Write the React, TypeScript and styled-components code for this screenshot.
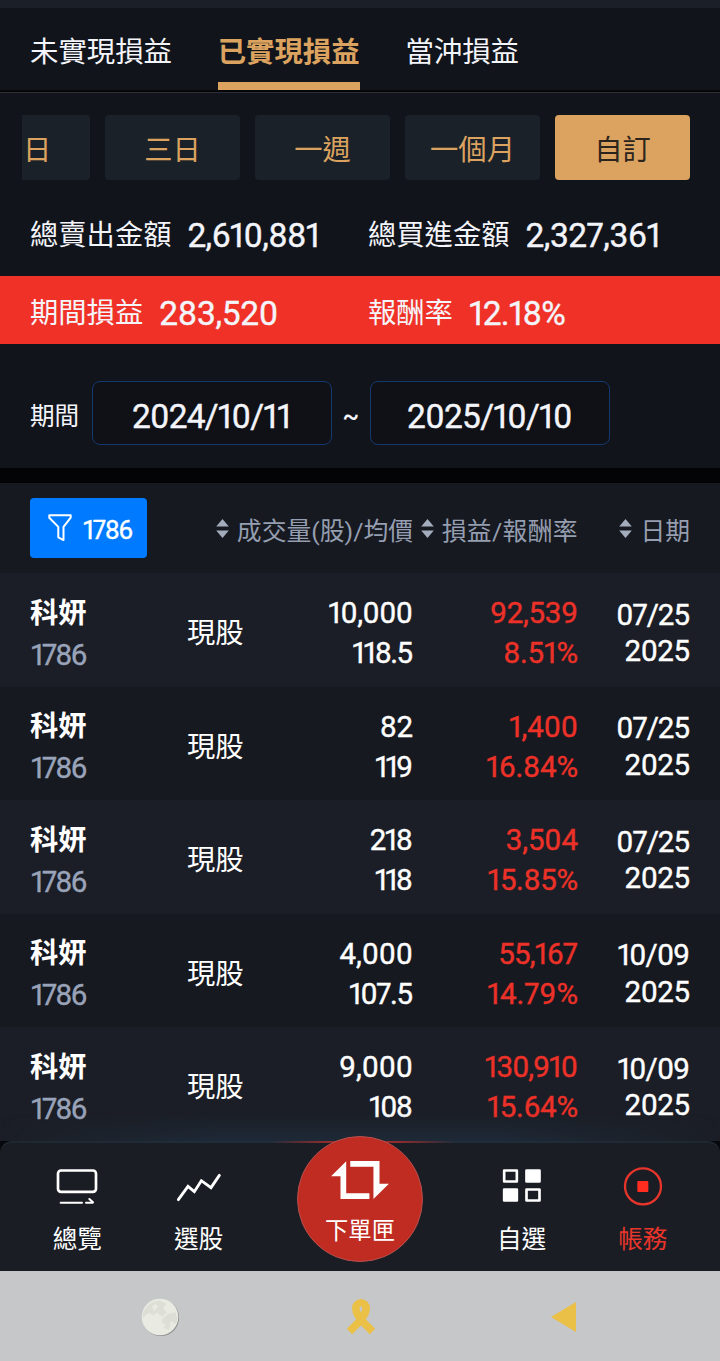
import React from "react";
import styled, { createGlobalStyle } from "styled-components";

const GlobalStyle = createGlobalStyle`
  *, *::before, *::after { box-sizing: border-box; }
  body {
    margin: 0;
    background: #11141b;
    color: #f4f5fa;
    font-family: Roboto, "Noto Sans CJK TC", sans-serif;
    font-variant-numeric: proportional-nums;
    font-size: 28.3px;
    white-space: nowrap;
  }
`;

const Screen = styled.div`
  width: 720px;
  height: 1361px;
  overflow: hidden;
  display: flex;
  flex-direction: column;
`;

const TopStrip = styled.div`
  height: 8px;
  flex: none;
  background: #1b1f28;
`;

const Tabs = styled.nav`
  display: flex;
  flex: none;
  gap: 45.7px;
  height: 85px;
  padding: 0 30px 0;
  background: linear-gradient(#11141b 82px, #050608 82px, #050608 84px, #2b2f35 84px);
`;

const Tab = styled.div<{ $active?: boolean }>`
  height: 82px;
  min-width: 142px;
  line-height: 89px;
  font-size: 28.4px;
  color: ${(p) => (p.$active ? "#dba35f" : "#f4f5fa")};
  font-weight: ${(p) => (p.$active ? 700 : 400)};
  box-shadow: ${(p) => (p.$active ? "inset 0 -8px #dba35f" : "none")};
`;

const Ranges = styled.div`
  display: flex;
  flex: none;
  gap: 15px;
  padding: 22px 30px 0 22px;
`;

const RangeButton = styled.div<{ $selected?: boolean; $cut?: boolean }>`
  width: ${(p) => (p.$cut ? "68px" : "135px")};
  padding-left: ${(p) => (p.$cut ? "1px" : "0")};
  text-align: ${(p) => (p.$cut ? "left" : "center")};
  height: 65px;
  line-height: 72px;
  border-radius: ${(p) => (p.$cut ? "0 4px 4px 0" : "4px")};
  background: ${(p) => (p.$selected ? "#dba35f" : "#1b2129")};
  color: ${(p) => (p.$selected ? "#2b241d" : "#dba35f")};
`;

const SummaryRow = styled.div<{ $highlight?: boolean }>`
  display: grid;
  flex: none;
  grid-template-columns: 338px 1fr;
  align-items: center;
  padding: ${(p) => (p.$highlight ? "8px 0 0 30px" : "15px 0 0 30px")};
  height: ${(p) => (p.$highlight ? "68px" : "96px")};
  background: ${(p) => (p.$highlight ? "#f03127" : "transparent")};
`;

const Pair = styled.div`
  display: flex;
  gap: 16px;
  line-height: 40px;
`;

const Num = styled.span<{ $size: number; $ls?: number }>`
  font-size: ${(p) => p.$size}px;
  letter-spacing: ${(p) => p.$ls ?? 0}px;
  margin-right: ${(p) => -(p.$ls ?? 0)}px;
  -webkit-text-stroke: 0.4px currentColor;
`;

const Period = styled.div`
  display: flex;
  flex: none;
  align-items: center;
  height: 124px;
  padding: 14px 30px 0;
`;

const PeriodLabel = styled.span`
  width: 62px;
  padding-top: 1px;
  font-size: 24.6px;
`;

const DateField = styled.div`
  width: 239.5px;
  height: 64px;
  border: 1.4px solid #15396f;
  border-radius: 8px;
  background: #0f1116;
  line-height: 69px;
  text-align: center;
`;

const Tilde = styled.span`
  width: 38.5px;
  padding-top: 6px;
  text-align: center;
  font-size: 25px;
  font-weight: 500;
`;

const Divider = styled.div`
  height: 15px;
  flex: none;
  background: #030405;
`;

const columns = "157px 102px 124px 165px 112px";

const TableHead = styled.div`
  display: flex;
  flex: none;
  height: 90px;
  padding: 15px 30px 0;
  background: #161920;
`;

const FilterButton = styled.div`
  display: flex;
  align-items: center;
  gap: 11px;
  width: 117px;
  height: 60px;
  padding: 3px 0 0 18px;
  border-radius: 4px;
  background: #007bff;
  color: #fff;
`;

const FunnelIcon = styled.svg`
  width: 24px;
  height: 28px;
  margin-top: -4px;
`;

const SortColumn = styled.div<{ $width: number; $ls?: number }>`
  display: flex;
  justify-content: flex-end;
  align-items: center;
  gap: 8px;
  width: ${(p) => p.$width}px;
  height: 60px;
  font-size: 24.8px;
  letter-spacing: ${(p) => p.$ls ?? 0}px;
  color: #959eb0;
`;

const SortIcon = styled.svg`
  width: 13px;
  height: 19px;
`;

const SortLabel = styled.span`
  padding-top: 1px;
`;

const List = styled.div`
  flex: none;
  height: 568px;
`;

const Row = styled.div<{ $odd: boolean }>`
  display: grid;
  grid-template-columns: ${columns};
  height: 113.5px;
  padding: 0 30px;
  background: ${(p) => (p.$odd ? "#161920" : "#1b1e26")};
  color: #fff;
`;

const Cell = styled.div<{ $top: number; $line: number; $align?: string; $color?: string }>`
  display: flex;
  flex-direction: column;
  align-items: ${(p) => p.$align ?? "flex-end"};
  padding-top: ${(p) => p.$top}px;
  line-height: ${(p) => p.$line}px;
  color: ${(p) => p.$color ?? "#fff"};
`;

const StockName = styled.span`
  font-weight: 700;
`;

const Code = styled.span`
  margin-top: -1px;
  padding-left: 1px;
  color: #99a3b9;
`;

const BottomNav = styled.nav`
  position: relative;
  flex: none;
  display: grid;
  grid-template-columns: 121.5px 121px 202px 121px 121.5px;
  height: 130px;
  padding: 0 16.5px;
  background: #1a1d24;
  border-top: 2px solid #1f2831;
  border-radius: 12px 12px 0 0;
  &::before {
    content: "";
    position: absolute;
    left: 0;
    right: 0;
    bottom: 100%;
    height: 30px;
    background: linear-gradient(90deg, transparent, rgba(32, 48, 64, 0.7) 30%, rgba(32, 48, 64, 0.7) 70%, transparent);
    mask-image: linear-gradient(transparent, #000);
  }
  &::after {
    content: "";
    position: absolute;
    left: 270px;
    width: 185px;
    top: -2px;
    height: 2px;
    background: linear-gradient(90deg, transparent, #8f2c2e 30%, #8f2c2e 70%, transparent);
  }
`;

const NavBack = styled.div`
  flex: none;
  background: #07090c;
`;

const NavItem = styled.div<{ $active?: boolean }>`
  display: flex;
  flex-direction: column;
  align-items: center;
  padding-top: 21px;
  font-size: 24.6px;
  line-height: 32px;
  color: ${(p) => (p.$active ? "#e8352b" : "#fff")};
`;

const NavIcon = styled.svg`
  width: 44px;
  height: 44px;
  margin-bottom: 16px;
`;

const OrderButton = styled.div`
  position: relative;
  z-index: 1;
  justify-self: center;
  display: flex;
  flex-direction: column;
  align-items: center;
  width: 126px;
  height: 126px;
  margin-top: -7px;
  padding-top: 24px;
  border: 1.3px solid #b4504e;
  border-radius: 50%;
  background: #c12c22;
  color: #fff;
  font-size: 23.3px;
  line-height: 30px;
`;

const OrderIcon = styled.svg`
  width: 58px;
  height: 38px;
  margin-bottom: 17px;
`;

const SystemBar = styled.div`
  flex: none;
  display: flex;
  height: 90px;
  background: #c6c7c9;
`;

const SystemSlot = styled.div<{ $left: number }>`
  padding-top: 24px;
  margin-left: ${(p) => p.$left}px;
  width: 44px;
`;

const Sorter = ({ label, width, ls }: { label: string; width: number; ls?: number }) => (
  <SortColumn $width={width} $ls={ls}>
    <SortIcon viewBox="0 0 13 19">
      <path d="M6.5 0 12.8 7.5H.2zM6.5 19 .2 11.5h12.6z" fill="#a3acbd" />
    </SortIcon>
    <SortLabel>{label}</SortLabel>
  </SortColumn>
);

// A figure and its tracking in pixels.
type Figure = [string, number];

const Fig = ({ value }: { value: Figure }) => (
  <Num $size={29.5} $ls={value[1]}>
    {value[0]}
  </Num>
);

const july: Figure = ["07/25", -1];
const october: Figure = ["10/09", -0.9];

const trades: Figure[][] = [
  [["10,000", -0.5], ["118.5", -1.6], ["92,539", -0.3], ["8.51%", -0.3], july],
  [["82", -0.4], ["119", -2.2], ["1,400", -0.1], ["16.84%", -0.2], july],
  [["218", -1.6], ["118", -2.2], ["3,504", -0.1], ["15.85%", -0.4], july],
  [["4,000", -0.1], ["107.5", -1.4], ["55,167", -0.8], ["14.79%", 0], october],
  [["9,000", -0.1], ["108", -1.6], ["130,910", -1], ["15.64%", -0.3], october],
];

export default function App() {
  return (
    <>
      <GlobalStyle />
      <Screen>
        <TopStrip />
        <Tabs>
          <Tab>未實現損益</Tab>
          <Tab $active>已實現損益</Tab>
          <Tab>當沖損益</Tab>
        </Tabs>
        <Ranges>
          <RangeButton $cut>日</RangeButton>
          <RangeButton>三日</RangeButton>
          <RangeButton>一週</RangeButton>
          <RangeButton>一個月</RangeButton>
          <RangeButton $selected>自訂</RangeButton>
        </Ranges>
        <SummaryRow>
          <Pair>
            <span>總賣出金額</span>
            <Num $size={33.5} $ls={-0.75}>2,610,881</Num>
          </Pair>
          <Pair>
            <span>總買進金額</span>
            <Num $size={33.5} $ls={-0.5}>2,327,361</Num>
          </Pair>
        </SummaryRow>
        <SummaryRow $highlight>
          <Pair>
            <span>期間損益</span>
            <Num $size={33.5} $ls={-0.3}>283,520</Num>
          </Pair>
          <Pair>
            <span>報酬率</span>
            <Num $size={33.5} $ls={-0.8}>12.18%</Num>
          </Pair>
        </SummaryRow>
        <Period>
          <PeriodLabel>期間</PeriodLabel>
          <DateField>
            <Num $size={33.5} $ls={-0.8}>2024/10/11</Num>
          </DateField>
          <Tilde>~</Tilde>
          <DateField>
            <Num $size={33.5} $ls={-0.7}>2025/10/10</Num>
          </DateField>
        </Period>
        <Divider />
        <TableHead>
          <FilterButton>
            <FunnelIcon viewBox="0 0 24 28" fill="none" stroke="#fff" strokeWidth="2" strokeLinejoin="round">
              <path d="M1.3 1.3h21.4v2.4l-7.2 9.2v13.2l-5.2-2.8V12.9L1.3 3.7z" />
            </FunnelIcon>
            <Num $size={26} $ls={-1.5}>1786</Num>
          </FilterButton>
          <Sorter label="成交量(股)/均價" width={266} />
          <Sorter label="損益/報酬率" width={165} ls={0.35} />
          <Sorter label="日期" width={112} />
        </TableHead>
        <List>
          {trades.map(([qty, price, profit, rate, day], i) => (
            <Row key={i} $odd={i % 2 === 1}>
              <Cell $top={18.5} $line={43} $align="flex-start">
                <StockName>科妍</StockName>
                <Code>
                  <Num $size={29.5} $ls={-1.9}>1786</Num>
                </Code>
              </Cell>
              <Cell $top={41} $line={40} $align="flex-start">
                現股
              </Cell>
              <Cell $top={20} $line={40}>
                <Fig value={qty} />
                <Fig value={price} />
              </Cell>
              <Cell $top={20} $line={40} $color="#ec3128">
                <Fig value={profit} />
                <Fig value={rate} />
              </Cell>
              <Cell $top={23.5} $line={36.5}>
                <Fig value={day} />
                <Fig value={["2025", -0.5]} />
              </Cell>
            </Row>
          ))}
        </List>
        <NavBack>
          <BottomNav>
            <NavItem>
              <NavIcon viewBox="165 132 132 132" fill="none" stroke="currentColor" strokeWidth="8">
                <rect x="174" y="151.500" width="114" height="64" rx="9" />
                <path d="M182 248h64M258 248h20M268 237l11 10" strokeWidth="6" strokeLinecap="round" />
              </NavIcon>
              總覽
            </NavItem>
            <NavItem>
              <NavIcon viewBox="530 132 132 132" fill="none" stroke="currentColor" strokeWidth="8.5" strokeLinecap="round">
                <path d="M534 239 563 199 582 215 603 182 632 203 657 166" />
              </NavIcon>
              選股
            </NavItem>
            <OrderButton>
              <OrderIcon viewBox="273 125 172 113" fill="#fff">
                <path d="M318 126V221H387V238H301V170H273zM330 125H417V193H445L399 238V142H330z" />
              </OrderIcon>
              下單匣
            </OrderButton>
            <NavItem>
              <NavIcon viewBox="59 132 132 132" fill="none" stroke="currentColor" strokeWidth="8" strokeLinejoin="round">
                <path d="M71.500 151.500h38v33h-38zM138.500 208.500h39v33h-39z" />
                <path d="M138.500 151.500h39v33h-39zM71.500 208.500h38v33h-38z" fill="currentColor" />
              </NavIcon>
              自選
            </NavItem>
            <NavItem $active>
              <NavIcon viewBox="423 132 132 132" fill="none" stroke="currentColor" strokeWidth="7">
                <circle cx="489" cy="199" r="54" />
                <rect x="472" y="183" width="33" height="33" rx="3" fill="#ff2d20" stroke="none" />
              </NavIcon>
              帳務
            </NavItem>
          </BottomNav>
        </NavBack>
        <SystemBar>
          <SystemSlot $left={138}>
            <svg width="44" height="44" viewBox="0 0 44 44">
              <circle cx="22.800" cy="22.800" r="18.300" fill="#8f908e" />
              <circle cx="22" cy="22" r="18.300" fill="#e9eae2" />
              <path d="M8 13q5-7 13-7.500l7 3-3 5 4 4-5 4-5-4-4 3-4-3-6 5q-1-5 3-9.500zM24 24l6-5 7-2q4 6 1 12l-5-3-2 9-5-2 1-4-3-1z" fill="#dddfd6" />
              <path d="M14 11l4-2 2 3-4 4zM29 12l4 3-3 2z" fill="#e9eae2" />
            </svg>
          </SystemSlot>
          <SystemSlot $left={157}>
            <svg width="44" height="44" viewBox="0 0 44 44" fill="none" stroke="#ebc046">
              <path
                d="M10.500 36.500 20 27C24.500 22 27.200 17 27.200 13a5.200 5.200 0 1 0-10.400 0C16.800 17 19.500 22 24 27L33.500 36.500"
                strokeWidth="7.600"
              />
            </svg>
          </SystemSlot>
          <SystemSlot $left={158}>
            <svg width="44" height="44" viewBox="0 0 44 44">
              <path d="M10 22 35 7V37z" fill="#ebc046" />
            </svg>
          </SystemSlot>
        </SystemBar>
      </Screen>
    </>
  );
}
